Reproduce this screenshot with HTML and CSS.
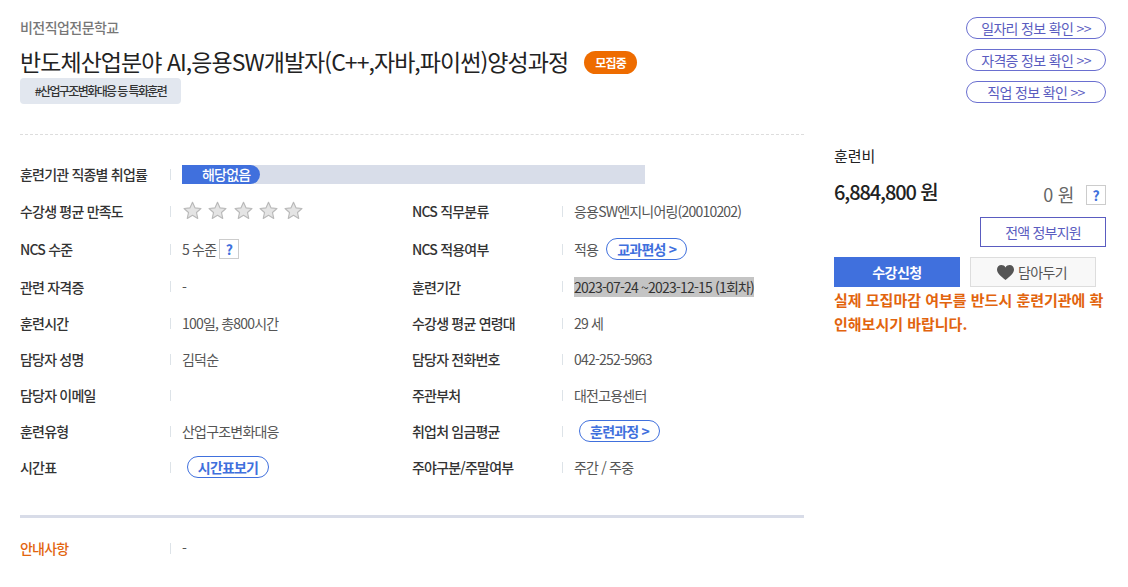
FILE: index.html
```html
<!DOCTYPE html>
<html lang="ko">
<head>
<meta charset="utf-8">
<title>과정 상세</title>
<link rel="stylesheet" href="styles.css">
</head>
<body>
<svg class="defs" width="0" height="0" aria-hidden="true"><defs>
<symbol id="star" viewBox="0 0 20 20"><path d="M10 1.4l2.6 5.8 6.3.7-4.7 4.2 1.3 6.2L10 15.1l-5.5 3.2 1.3-6.2L1.1 7.9l6.3-.7z" fill="#e4e4e4" stroke="#b9b9b9" stroke-width="1.2" stroke-linejoin="round"/></symbol>
</defs></svg>
<div class="page">
  <main class="main">
    <header class="head">
      <div class="school">비전직업전문학교</div>
      <div class="title-line">
        <h1 class="title">반도체산업분야 AI,응용SW개발자(C++,자바,파이썬)양성과정</h1>
        <span class="status">모집중</span>
      </div>
      <span class="tag">#산업구조변화대응 등 특화훈련</span>
    </header>
    <section class="info">
      <div class="row row-full h36">
        <div class="cell"><span class="label">훈련기관 직종별 취업률</span><span class="sep"></span>
          <div class="bar"><span class="bar-fill">해당없음</span></div></div>
      </div>
      <div class="row h38">
        <div class="cell"><span class="label">수강생 평균 만족도</span><span class="sep"></span>
          <span class="stars">
            <svg class="star"><use href="#star"/></svg><svg class="star"><use href="#star"/></svg><svg class="star"><use href="#star"/></svg><svg class="star"><use href="#star"/></svg><svg class="star"><use href="#star"/></svg>
          </span></div>
        <div class="cell"><span class="label">NCS 직무분류</span><span class="sep"></span><span class="value">응용SW엔지니어링(20010202)</span></div>
      </div>
      <div class="row h38">
        <div class="cell"><span class="label">NCS 수준</span><span class="sep"></span><span class="value">5 수준</span><span class="help help-inline">?</span></div>
        <div class="cell"><span class="label">NCS 적용여부</span><span class="sep"></span><span class="value">적용</span><a class="pill pill-a">교과편성 &gt;</a></div>
      </div>
      <div class="row h37">
        <div class="cell"><span class="label">관련 자격증</span><span class="sep"></span><span class="value">-</span></div>
        <div class="cell"><span class="label">훈련기간</span><span class="sep"></span><span class="value mark">2023-07-24 ~2023-12-15 (1회차)</span></div>
      </div>
      <div class="row h36">
        <div class="cell"><span class="label">훈련시간</span><span class="sep"></span><span class="value">100일, 총800시간</span></div>
        <div class="cell"><span class="label">수강생 평균 연령대</span><span class="sep"></span><span class="value">29 세</span></div>
      </div>
      <div class="row h36">
        <div class="cell"><span class="label">담당자 성명</span><span class="sep"></span><span class="value">김덕순</span></div>
        <div class="cell"><span class="label">담당자 전화번호</span><span class="sep"></span><span class="value">042-252-5963</span></div>
      </div>
      <div class="row h36">
        <div class="cell"><span class="label">담당자 이메일</span><span class="sep"></span></div>
        <div class="cell"><span class="label">주관부처</span><span class="sep"></span><span class="value">대전고용센터</span></div>
      </div>
      <div class="row h36">
        <div class="cell"><span class="label">훈련유형</span><span class="sep"></span><span class="value">산업구조변화대응</span></div>
        <div class="cell"><span class="label">취업처 임금평균</span><span class="sep"></span><a class="pill pill-b">훈련과정 &gt;</a></div>
      </div>
      <div class="row h36">
        <div class="cell"><span class="label">시간표</span><span class="sep"></span><a class="pill pill-c">시간표보기</a></div>
        <div class="cell"><span class="label">주야구분/주말여부</span><span class="sep"></span><span class="value">주간 / 주중</span></div>
      </div>
    </section>
    <section class="notice">
      <div class="cell"><span class="label label-em">안내사항</span><span class="sep"></span><span class="value">-</span></div>
    </section>
  </main>
  <aside class="side">
    <nav class="links">
      <a class="link">일자리 정보 확인 &gt;&gt;</a>
      <a class="link">자격증 정보 확인 &gt;&gt;</a>
      <a class="link">직업 정보 확인 &gt;&gt;</a>
    </nav>
    <div class="fee-title">훈련비</div>
    <div class="fee-line">
      <span class="fee">6,884,800 원</span>
      <span class="fee-right"><span class="fee-self">0 원</span><span class="help">?</span></span>
    </div>
    <div class="gov-line"><span class="gov">전액 정부지원</span></div>
    <div class="actions">
      <a class="btn btn-apply">수강신청</a>
      <a class="btn btn-save"><svg class="heart" viewBox="0 0 16 14"><path d="M8 14C3 10 0 7.6 0 4.2 0 1.8 1.8 0 4.1 0 5.7 0 7.2.8 8 2.2 8.800.8 10.300 0 11.900 0 14.200 0 16 1.800 16 4.200 16 7.600 13 10 8 14z" fill="#555"/></svg>담아두기</a>
    </div>
    <p class="warn">실제 모집마감 여부를 반드시 훈련기관에 확인해보시기 바랍니다.</p>
  </aside>
</div>
</body>
</html>
```
FILE: styles.css
```css
* { box-sizing: border-box; }
html, body { margin: 0; padding: 0; background: #fff; }
body { font-family: "Noto Sans CJK KR", "Noto Sans", sans-serif; font-size: 14px; color: #333; letter-spacing: -0.8px; overflow: hidden; height: 587px; }
.defs { position: absolute; }
.page { display: flex; padding: 0 22px 0 20px; gap: 30px; }
.main { width: 784px; flex: none; }
.side { width: 272px; flex: none; }

.head { height: 135px; padding-top: 17px; border-bottom: 1px dashed #ddd; }
.school { font-size: 14px; line-height: 20px; font-weight: 500; color: #777; letter-spacing: -0.55px; }
.title-line { display: flex; align-items: center; margin-top: 8px; height: 34px; }
.title { margin: 0; padding-bottom: 2px; font-size: 23px; line-height: 34px; font-weight: 400; color: #222; letter-spacing: -0.95px; }
.status { margin-left: 16px; width: 53px; height: 23px; border-radius: 12px; background: #ee6c00; color: #fff; font-size: 12px; font-weight: 700; line-height: 23px; text-align: center; }
.tag { display: inline-block; margin-top: -1px; width: 161px; height: 26px; background: #e2e7ef; border-radius: 4px; font-size: 12px; font-weight: 500; line-height: 26px; text-align: center; color: #333; vertical-align: top; letter-spacing: -1.6px; }

.info { padding-top: 21px; height: 383px; border-bottom: 3px solid #d8dce8; }
.row { display: grid; grid-template-columns: 392px 392px; align-items: center; }
.row-full { grid-template-columns: 1fr; }
.h36 { height: 36px; }
.h37 { height: 37px; }
.h38 { height: 38px; }
.cell { display: flex; align-items: center; height: 100%; }
.label { width: 150px; flex: none; font-weight: 500; color: #333; font-size: 14px; line-height: 20px; }
.label-em { color: #e2640e; }
.sep { flex: none; width: 1px; height: 11px; background: #dde3e8; margin-right: 11px; }
.value { color: #555; font-size: 14px; line-height: 20px; white-space: nowrap; }
.mark { background: #c4c4c4; color: #333; }

.bar { width: 463px; height: 19px; background: #d8dde9; }
.bar-fill { display: block; width: 78px; height: 19px; padding-left: 20px; background: #4070dd; border-radius: 0 10px 10px 0; color: #fff; font-size: 14px; font-weight: 500; line-height: 19px; }
.stars { display: flex; gap: 6.25px; margin-left: 1px; margin-top: -2px; }
.star { width: 19px; height: 19px; display: block; }
.help { display: inline-block; width: 20px; height: 20px; border: 1px solid #ccc; background: #fff; color: #4070dd; font-size: 14px; font-weight: 700; line-height: 18px; text-align: center; letter-spacing: 0; }
.help-inline { margin-left: 3px; }
.pill { display: inline-block; height: 22px; border: 1px solid #4070dd; border-radius: 11px; color: #4070dd; font-size: 14px; font-weight: 700; line-height: 20px; text-align: center; background: #fff; white-space: nowrap; }
.pill-a { width: 81px; margin-left: 8px; }
.pill-b { width: 81px; margin-left: 5px; }
.pill-c { width: 82px; margin-left: 5px; }

.notice { height: 66px; padding-top: 12px; }
.notice .cell { height: 36px; }

.links { display: flex; flex-direction: column; align-items: flex-end; gap: 10px; padding-top: 17px; height: 145px; }
.link { width: 140px; height: 22px; border: 1px solid #6a6fd0; border-radius: 11px; color: #5a5cc0; font-size: 14px; line-height: 20px; text-align: center; white-space: nowrap; letter-spacing: -0.65px; }
.fee-title { color: #222; font-size: 15px; line-height: 22px; font-weight: 400; height: 22px; letter-spacing: -0.1px; }
.fee-line { display: flex; justify-content: space-between; align-items: flex-start; margin-top: 13px; height: 36px; }
.fee { font-size: 20px; line-height: 24px; color: #222; font-weight: 500; letter-spacing: -1.1px; }
.fee-right { display: flex; align-items: center; gap: 12px; margin-top: 3px; }
.fee-self { font-size: 18px; line-height: 24px; color: #666; letter-spacing: -0.3px; margin-top: -1px; }
.gov-line { display: flex; justify-content: flex-end; margin-top: 1px; }
.gov { display: block; width: 126px; height: 30px; border: 1px solid #5a5cc0; color: #5a5cc0; font-size: 14px; line-height: 28px; text-align: center; }
.actions { display: flex; gap: 10px; margin-top: 10px; }
.btn { display: flex; align-items: center; justify-content: center; width: 126px; height: 30px; font-size: 14px; }
.btn-apply { background: #4070dd; color: #fff; font-weight: 700; letter-spacing: -0.5px; }
.btn-save { background: #f8f8f8; border: 1px solid #ddd; color: #555; gap: 4px; letter-spacing: -0.6px; padding-right: 2px; }
.heart { width: 17px; height: 15px; }
.warn { margin: 1px 0 0; color: #e2640e; font-size: 15px; font-weight: 700; line-height: 24px; letter-spacing: 0; word-break: break-all; }
```
